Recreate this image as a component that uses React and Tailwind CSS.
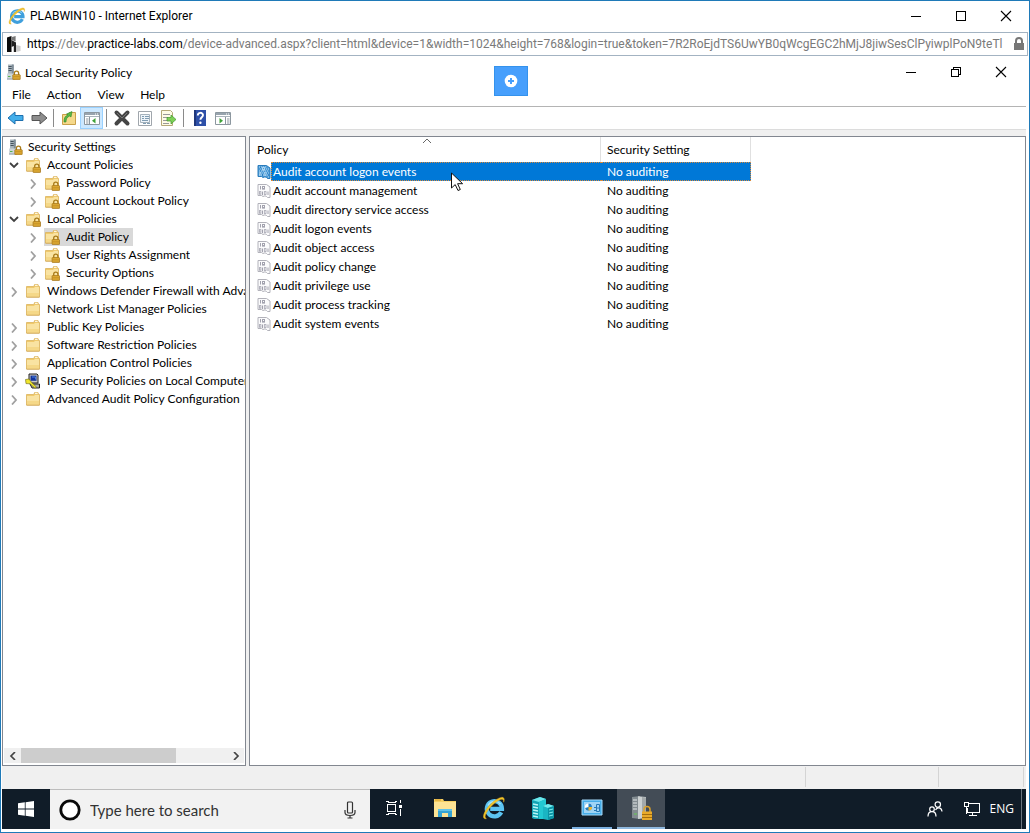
import React from "react";

function IeIcon({ className, dark }) {
  return (
    <svg viewBox="0 0 24 24" className={className} aria-hidden="true">
      <path
        d="M19.2 16.2 A7.6 7.6 0 1 1 20 12.9 H8.2"
        fill="none"
        stroke={dark ? "#5cc4f2" : "#3f9fdc"}
        strokeWidth="4.2"
      />
      <path d="M6 9.5 A7.6 7.6 0 0 1 18.5 8" fill="none" stroke={dark ? "#a8e4fb" : "#8ccdf0"} strokeWidth="1.4" />
      <path
        d="M4.4 22.6 C1.2 23.6 .4 20.6 3 15.6 C6.4 9 14.2 2.2 19.4 1.4 C22.4 1 22.8 3.6 21.6 6.2 C22 3.6 20.8 2.8 18.6 3.6 C13.6 5.4 7.4 11.4 4.4 16.8 C2.6 20.2 2.8 22 4.4 22.6Z"
        fill="#f3c72c"
        stroke="#dba51b"
        strokeWidth=".5"
      />
    </svg>
  );
}

function Lock({ x, y }) {
  return (
    <g transform={`translate(${x} ${y})`}>
      <path d="M1.9 4.4 V2.8 a2.1 2.1 0 0 1 4.2 0 V4.4" fill="none" stroke="#a87a18" strokeWidth="1.3" />
      <rect x=".3" y="4.2" width="7.4" height="5" rx=".6" fill="#e6b23a" stroke="#9c6c10" strokeWidth=".7" />
      <path d="M.8 5.9h6.4M.8 7.6h6.4" stroke="#b07c14" strokeWidth=".6" />
    </g>
  );
}

function ServerLock() {
  return (
    <svg viewBox="0 0 16 16" className="h-4 w-4 shrink-0" aria-hidden="true">
      <path d="M2 .5 H7.5 V11 H2Z" fill="#a9b5bd" />
      <path d="M5.8 .5 H7.8 V11 H5.8Z" fill="#7f8d98" />
      <path d="M2.5 2.5h3.200M2.500 4.500h3.200M2.500 6.500h3.200" stroke="#44525e" />
      <path d="M1 9.500 H9 V15.500 H1Z" fill="#cdd6dc" />
      <path d="M1 15h8" stroke="#94a1ab" />
      <path d="M2 12.500h2.500" stroke="#57b34c" />
      <Lock x="6.500" y="6.500" />
    </svg>
  );
}

function Folder({ locked }) {
  return (
    <svg viewBox="0 0 16 16" className="h-4 w-4 shrink-0" aria-hidden="true">
      <path d="M1.500 3.500 H8.800 L9.600 1.500 H13 L13.600 3.500 H14.500 V14 H1.500Z" fill="#f0ca6c" stroke="#dbb25c" strokeWidth=".8" />
      <path d="M10 2.300h2.600" stroke="#fff" strokeWidth="1" />
      <path d="M2 5 H8.800 L10 3.900 H14 V14 H2Z" fill="#f9e3a2" />
      <path d="M2 10h12v4H2z" fill="#f5d888" />
      <path d="M1.500 14.200h13" stroke="#d0a550" strokeWidth=".8" />
      {locked && <Lock x="7.800" y="6.400" />}
    </svg>
  );
}

function IpSec() {
  return (
    <svg viewBox="0 0 16 16" className="h-4 w-4 shrink-0" aria-hidden="true">
      <path d="M4 1 H12 L13 2 V10 H4Z" fill="#c9c9c2" stroke="#222" strokeWidth="1" />
      <path d="M5.500 2.600h6v5.200h-6z" fill="#14349c" />
      <path d="M7 4h3.500v2.400" stroke="#4a82e0" fill="none" />
      <path d="M5 11 H14.500 V15 H7Z" fill="#aaa" stroke="#222" strokeWidth="1" />
      <path d="M.5 6.500 L4 6 L6.600 9.400 L11.400 14 L10 15.200 L5 10.800 L1 10.600Z" fill="#efe52c" stroke="#6b6710" strokeWidth=".6" />
    </svg>
  );
}

function PolicyIcon({ selected }) {
  const ink = selected ? "#2a7fc4" : "#a2a2ae";
  const light = selected ? "#a7cfec" : "#a2a2ae";
  return (
    <svg viewBox="0 0 14 16" className="h-4 w-[14px] shrink-0" aria-hidden="true">
      <path
        d="M1 1.500 H9.500 L13 4 V14.500 H10.500 L9.500 13.500 L8 12.800 L6 13.500 L4.500 12.500 H1Z"
        fill={selected ? "#4b9ad6" : "#fbfbfc"}
        stroke={selected ? "#2b7cbc" : "#b2b2ba"}
      />
      <path d="M3.500 3v3.500M5.500 8.500V12M11 8.500V12" stroke={ink} />
      <rect x="5.500" y="3.500" width="2" height="2.600" fill="none" stroke={light} />
      <rect x="2.400" y="8.600" width="1.500" height="2.600" fill="none" stroke={light} strokeWidth=".8" />
      <rect x="7.300" y="8.600" width="1.700" height="2.800" fill="none" stroke={light} strokeWidth=".8" />
      {selected && (
        <path
          d="M2 3h1M4 3h1M6 3h1M8 3h1M3 5h1M5 5h1M7 5h1M9 5h1M11 5h1M2 7h1M4 7h1M6 7h1M8 7h1M10 7h1M3 9h1M5 9h1M7 9h1M9 9h1M11 9h1M2 11h1M4 11h1M6 11h1M8 11h1M10 11h1M11 13h1"
          stroke="#b6dcf5"
        />
      )}
    </svg>
  );
}

function Chevron({ open }) {
  return (
    <svg viewBox="0 0 12 12" className="h-3 w-3" aria-hidden="true">
      {open ? (
        <path d="M2 4 L6 8 L10 4" fill="none" stroke="#404040" strokeWidth="1.800" />
      ) : (
        <path d="M4 2.500 L8 7 L4 11.500" fill="none" stroke="#a0a0a0" strokeWidth="1.800" />
      )}
    </svg>
  );
}

const tree = [
  { label: "Account Policies", level: 1, state: "open", icon: "locked" },
  { label: "Password Policy", level: 2, state: "closed", icon: "locked" },
  { label: "Account Lockout Policy", level: 2, state: "closed", icon: "locked" },
  { label: "Local Policies", level: 1, state: "open", icon: "locked" },
  { label: "Audit Policy", level: 2, state: "closed", icon: "locked", selected: true },
  { label: "User Rights Assignment", level: 2, state: "closed", icon: "locked" },
  { label: "Security Options", level: 2, state: "closed", icon: "locked" },
  { label: "Windows Defender Firewall with Advanced", level: 1, state: "closed", icon: "folder" },
  { label: "Network List Manager Policies", level: 1, icon: "folder" },
  { label: "Public Key Policies", level: 1, state: "closed", icon: "folder" },
  { label: "Software Restriction Policies", level: 1, state: "closed", icon: "folder" },
  { label: "Application Control Policies", level: 1, state: "closed", icon: "folder" },
  { label: "IP Security Policies on Local Computer", level: 1, state: "closed", icon: "ip" },
  { label: "Advanced Audit Policy Configuration", level: 1, state: "closed", icon: "folder" },
];

const policies = [
  "Audit account logon events",
  "Audit account management",
  "Audit directory service access",
  "Audit logon events",
  "Audit object access",
  "Audit policy change",
  "Audit privilege use",
  "Audit process tracking",
  "Audit system events",
];

function TreeRow({ item }) {
  return (
    <li className={`flex h-[18px] items-center ${item.level === 2 ? "pl-[23px]" : "pl-1"}`} role="treeitem" aria-selected={!!item.selected}>
      {item.state ? (
        <button type="button" aria-label={`Toggle ${item.label}`} className="flex w-[18px] shrink-0 pl-px">
          <Chevron open={item.state === "open"} />
        </button>
      ) : (
        <span className="w-[18px] shrink-0" />
      )}
      <span className={`flex h-[18px] min-w-0 items-center gap-[6px] pr-1 ${item.selected ? "bg-[#d9d9d9]" : "-mr-1"}`}>
        {item.icon === "ip" ? <IpSec /> : <Folder locked={item.icon === "locked"} />}
        <span className="min-w-0 overflow-hidden whitespace-nowrap">{item.label}</span>
      </span>
    </li>
  );
}

function WindowButtons({ restore }) {
  return (
    <div className={`flex items-center ${restore ? "pr-[2px]" : ""}`}>
      <button type="button" aria-label="Minimize" className="flex h-7 w-[45px] items-center justify-center">
        <svg viewBox="0 0 12 12" className="h-3 w-3" shapeRendering="crispEdges"><path d="M1 6.500h10" stroke="#000" /></svg>
      </button>
      <button type="button" aria-label={restore ? "Restore" : "Maximize"} className="flex h-7 w-[46px] items-center justify-center">
        <svg viewBox="0 0 12 12" className="h-3 w-3" fill="none" stroke="#000" shapeRendering="crispEdges">
          {restore ? <path d="M1.500 3.500h7v7h-7zM3.500 3.500v-2h7v7h-2" /> : <path d="M1.500 1.500h9v9h-9z" />}
        </svg>
      </button>
      <button type="button" aria-label="Close" className="flex h-7 w-[44px] items-center justify-center">
        <svg viewBox="0 0 12 12" className="h-3 w-3"><path d="M1 1l10 10M11 1L1 11" stroke="#000" strokeWidth="1.100" /></svg>
      </button>
    </div>
  );
}

function Tool({ label, active, children }) {
  return (
    <button type="button" aria-label={label} className={`flex h-[22px] w-[23px] items-center justify-center ${active ? "border border-[#99d1ff] bg-[#cce8ff]" : ""}`}>
      <svg viewBox="0 0 18 18" className="h-[18px] w-[18px] shrink-0">{children}</svg>
    </button>
  );
}

function PanelGlyph({ right }) {
  return (
    <>
      <path d="M1.500 3.500h15v12h-15z" fill="#fff" stroke="#8c979f" />
      <path d="M2 4h14v2H2z" fill="#98a4ae" />
      <path d="M12 5h1M14 5h1" stroke="#fff" />
      <path d="M2 7.500h14" stroke="#aab4bc" />
      <path d={right ? "M11.500 8v7" : "M6.500 8v7"} stroke="#8c979f" />
      <path d={right ? "M13 10h2.500M13 12h2.500M13 14h2.500" : "M3 10h2.500M3 12h2.500M3 14h2.500"} stroke="#8c979f" />
      <path d={right ? "M5.500 9l3.500 2.700-3.500 2.700z" : "M12.500 9L9 11.700l3.500 2.700z"} fill="#3fa338" />
    </>
  );
}

const Divider = () => <span className="mx-[3px] h-[18px] w-px bg-[#8a8a8a]" />;

function TaskButton({ label, state, children }) {
  return (
    <button
      type="button"
      aria-label={label}
      className={`flex h-10 w-12 items-center justify-center border-b-2 ${state === "active" ? "border-[#8fb8de] bg-[#434c56]" : "border-transparent"}`}
    >
      {children}
    </button>
  );
}

export default function App() {
  return (
    <div className="relative flex min-h-screen flex-col border border-[#1f7ab8] bg-white px-px font-['Lato','Open_Sans',sans-serif] text-[12px] leading-4 text-black">
      <header className="flex h-[30px] items-center pl-[6px] font-['Roboto',sans-serif]">
        <IeIcon className="h-[18px] w-[18px]" />
        <h1 className="flex-1 pl-1">PLABWIN10 - Internet Explorer</h1>
        <WindowButtons />
      </header>

      <div className="mt-px flex h-6 items-center border border-[#a3b3c2] pl-1 pr-[2px]">
        <svg viewBox="0 0 16 16" className="h-4 w-4 shrink-0" aria-hidden="true">
          <path d="M0 1.500 L4.500 0 V16 H0Z" fill="#0a0a0a" />
          <path d="M4.500 4 L9 6.500 V16 H6.800 V10 L4.500 11Z" fill="#222" />
          <path d="M5 1 L8.600 0 V5.400 L5 4Z" fill="#777" />
          <path d="M9 9 L13.500 10 V15 L9 16Z" fill="#ccc" />
        </svg>
        <p className="min-w-0 flex-1 overflow-hidden whitespace-nowrap pl-1 font-['Roboto',sans-serif] text-[#7a7a7a]">
          <span className="text-black">https</span>://dev.<span className="text-black">practice-labs.com</span>
          /device-advanced.aspx?client=html&amp;device=1&amp;width=1024&amp;height=768&amp;login=true&amp;token=7R2RoEjdTS6UwYB0qWcgEGC2hMjJ8jiwSesClPyiwplPoN9teTl
        </p>
        <svg viewBox="0 0 12 14" className="ml-1 h-[14px] w-3 shrink-0" aria-hidden="true">
          <path d="M3 7V4a3 3 0 0 1 6 0v3" fill="none" stroke="#777" strokeWidth="2" />
          <path d="M1 6h10v7H1z" fill="#777" />
        </svg>
      </div>

      <div className="flex h-[31px] items-center pl-1 pr-[3px]">
        <ServerLock />
        <h2 className="flex-1 pl-[3px] pt-[2px]">Local Security Policy</h2>
        <WindowButtons restore />
      </div>
      <nav className="mr-[2px] flex h-5 gap-4 border-b border-[#b4b4b4] pl-[10px]">
        <button type="button" className="h-4">File</button>
        <button type="button" className="h-4">Action</button>
        <button type="button" className="h-4">View</button>
        <button type="button" className="h-4">Help</button>
      </nav>

      <div role="toolbar" className="flex h-[22px] items-center pl-[2px]">
        <Tool label="Back">
          <path d="M1 9l7-6v3.500h8v5H8V15z" fill="#43aeea" stroke="#1d6fae" />
        </Tool>
        <Tool label="Forward">
          <path d="M17 9l-7-6v3.500H2v5h8V15z" fill="#8d8d8d" stroke="#555" />
        </Tool>
        <Divider />
        <Tool label="Up one level">
          <path d="M2.500 5.500h6l1-2h6v12h-13z" fill="#f5d88a" stroke="#c9a04a" />
          <path d="M4 13c0-4 1-6 4-7L6.500 5 12 2.500 11 8 9.700 7C7 8 6 10 6 13z" fill="#58b947" stroke="#31852a" strokeWidth=".6" />
        </Tool>
        <Tool label="Show console tree" active><PanelGlyph /></Tool>
        <Divider />
        <Tool label="Delete">
          <path d="M3.500 3.500l11 11M14.500 3.500l-11 11" stroke="#454545" strokeWidth="4" strokeLinecap="round" />
          <path d="M4 4l5 5 5-5" fill="none" stroke="#777" strokeWidth="1" />
        </Tool>
        <Tool label="Properties">
          <path d="M2.500 2.500h13v14h-13z" fill="#fff" stroke="#a0a6ac" />
          <path d="M4.500 5.500h9v8h-9z" fill="#eef4f9" stroke="#a6b2bc" />
          <path d="M6 7.500h2M9 7.500h4M6 9.500h2M9 9.500h4M6 11.500h6M7 14.500h3M11 14.500h3" stroke="#7f9cb2" />
        </Tool>
        <Tool label="Export list">
          <path d="M2.500 1.500h9l2 2v13h-11z" fill="#fffbe6" stroke="#b5a978" />
          <path d="M4 5.500h7M4 8.500h5M4 11.500h4M4 14.500h6" stroke="#999" />
          <path d="M8 8.500h4V6l5 4.500-5 4.500v-3H8z" fill="#7ed057" stroke="#3f9a2c" strokeWidth=".7" />
        </Tool>
        <span className="mx-1 h-[18px] w-px bg-[#8a8a8a]" />
        <Tool label="Help">
          <path d="M3 1h12v16H3z" fill="#2e50a8" />
          <path d="M3 1h2v16H3z" fill="#1f377b" />
          <path d="M6.800 6.500c0-3.600 5.200-3.400 5.200-.4 0 2-2.600 2.300-2.600 4.700" fill="none" stroke="#fff" strokeWidth="1.900" />
          <circle cx="9.400" cy="13.700" r="1.200" fill="#fff" />
        </Tool>
        <Tool label="Show action pane"><PanelGlyph right /></Tool>
      </div>

      <main className="mr-[2px] flex flex-1 gap-[3px] border-t border-[#dcdcdc] bg-[#f0f0f0] pt-[6px]">
        <aside className="flex w-[244px] shrink-0 flex-col border border-[#828790] bg-white">
          <div className="flex-1 overflow-hidden pt-px">
            <div className="flex h-[18px] items-center gap-1 pl-[5px]">
              <ServerLock />
              <span>Security Settings</span>
            </div>
            <ul role="tree">
              {tree.map((item) => <TreeRow key={item.label} item={item} />)}
            </ul>
          </div>
          <div className="mx-px mb-[2px] flex h-[15px] items-center bg-[#f0f0f0]">
            <button type="button" aria-label="Scroll left" className="flex w-[17px] justify-center">
              <svg viewBox="0 0 8 8" className="h-2 w-2"><path d="M6 0L2 4l4 4" fill="none" stroke="#444" strokeWidth="1.700" /></svg>
            </button>
            <div className="flex h-[15px] flex-1"><div className="w-3/4 bg-[#cdcdcd]" /></div>
            <button type="button" aria-label="Scroll right" className="flex w-[17px] justify-center">
              <svg viewBox="0 0 8 8" className="h-2 w-2"><path d="M2 0l4 4-4 4" fill="none" stroke="#444" strokeWidth="1.700" /></svg>
            </button>
          </div>
        </aside>

        <section className="flex-1 border border-[#828790] bg-white">
          <table className="w-[501px] table-fixed border-separate border-spacing-0 text-left">
            <thead>
              <tr className="h-[25px]">
                <th className="relative w-[351px] border-r border-[#e0e0e0] p-0 pl-[7px] font-normal">
                  Policy
                  <svg viewBox="0 0 10 6" className="absolute right-[168px] top-px h-[6px] w-[10px]" aria-hidden="true"><path d="M1 5l4-4 4 4" fill="none" stroke="#666" /></svg>
                </th>
                <th className="border-r border-[#e0e0e0] p-0 pl-[6px] font-normal">Security Setting</th>
              </tr>
            </thead>
            <tbody>
              {policies.map((name, i) => (
                <tr key={name} className={`h-[19px] ${i === 0 ? "text-white" : ""}`}>
                  <td className="p-0">
                    <div className="flex h-[19px] items-center pl-[7px]">
                      <PolicyIcon selected={i === 0} />
                      <span className={`flex h-[19px] flex-1 items-center ${i === 0 ? "border-y border-l border-dotted border-[#d98a3c] bg-[#0078d7] pl-px" : "pl-[2px]"}`}>{name}</span>
                    </div>
                  </td>
                  <td className="p-0">
                    <div className={`flex h-[19px] items-center pl-[6px] ${i === 0 ? "border-y border-r border-dotted border-[#d98a3c] bg-[#0078d7]" : ""}`}>No auditing</div>
                  </td>
                </tr>
              ))}
            </tbody>
          </table>
        </section>
      </main>

      <footer className="mr-[2px] flex h-[23px] justify-end bg-[#f0f0f0] pt-px">
        <span className="h-5 w-[133px] border-l border-[#d4d4d4]" />
        <span className="h-5 w-[86px] border-x border-[#d4d4d4]" />
        <span className="w-[2px]" />
      </footer>

      <div className="mb-[3px] mr-[2px] flex h-10 bg-[#101c28]">
        <button type="button" aria-label="Start" className="flex w-12 items-center justify-center">
          <svg viewBox="0 0 16 16" className="h-4 w-4" fill="#fff"><path d="M0 2.300L6.800 1.300V7.600H0zM7.600 1.200L16 0v7.600H7.600zM0 8.400h6.800v6.300L0 13.700zM7.600 8.400H16V16l-8.400-1.200z" /></svg>
        </button>
        <label className="flex w-80 items-center border-t border-[#bdbdbd] bg-[#f2f2f2] pl-[9px] pr-3">
          <svg viewBox="0 0 22 22" className="h-[22px] w-[22px] shrink-0"><circle cx="11" cy="11" r="9.200" fill="#fff" stroke="#0a0a0a" strokeWidth="2.800" /></svg>
          <input type="text" aria-label="Search" placeholder="Type here to search" className="min-w-0 flex-1 bg-transparent pl-[9px] text-[15px] leading-5 placeholder:text-[#333] outline-none" />
          <svg viewBox="0 0 16 18" className="h-[18px] w-4 shrink-0" fill="none" stroke="#333" strokeWidth="1.200">
            <rect x="5.500" y="1" width="5" height="11" rx="1" />
            <path d="M3 9v2.500c0 2 1.500 3 5 3s5-1 5-3V9M8 14.500V17M5.500 17h5" />
          </svg>
        </label>
        <div className="flex gap-px">
          <TaskButton label="Task View">
            <svg viewBox="0 0 18 18" className="h-[18px] w-[18px]" fill="none" stroke="#fff" shapeRendering="crispEdges">
              <path d="M2.500 5.500h8v7h-8zM1 2.500h2v1h7v-1h2M1 15.500h2v-1h7v1h2M15.500 1v3M15.500 10v7" />
              <path d="M14 6h3v3h-3z" fill="#fff" stroke="none" />
            </svg>
          </TaskButton>
          <span className="w-px" />
          <TaskButton label="File Explorer">
            <svg viewBox="0 0 24 24" className="h-6 w-6">
              <path d="M1 3h9l1 2h12v16H1z" fill="#f5cf62" />
              <path d="M1 6h22v15H1z" fill="#fde394" />
              <path d="M2 4h6" stroke="#d59b2c" />
              <path d="M5 13h14v8h-4v-4H9v4H5z" fill="#36a3d3" />
              <path d="M5 13h14v2H5z" fill="#61c3e8" />
            </svg>
          </TaskButton>
          <TaskButton label="Internet Explorer"><IeIcon dark className="h-6 w-6" /></TaskButton>
          <TaskButton label="Server Manager">
            <svg viewBox="0 0 24 24" className="h-6 w-6">
              <path d="M1 4l8-3 6 2v20H3l-2-1z" fill="#13a4b4" />
              <path d="M1 4l8-3 6 2-7 3z" fill="#6de8ec" />
              <path d="M8 6l7-3v20H8z" fill="#22c8d2" />
              <path d="M2 8l5 1M2 11l5 1M2 14l5 1M2 17l5 1M2 20l5 1" stroke="#b5f6f6" strokeWidth="1.300" />
              <path d="M12 10l5-2 6 2v12l-6 2-5-1z" fill="#1ab5c3" />
              <path d="M12 10l5-2 6 2-6 2z" fill="#72e9ed" />
              <path d="M17 12l6-2v12l-6 2z" fill="#0b93a4" />
              <path d="M18 14l4-1M18 17l4-1M18 20l4-1" stroke="#82eef0" />
            </svg>
          </TaskButton>
          <span className="flex w-12 justify-center">
            <button type="button" aria-label="Control Panel" className="flex h-10 w-10 items-center justify-center border-b-2 border-[#7cb1e2]">
              <svg viewBox="0 0 22 18" className="h-[18px] w-[22px]">
                <path d="M1 1h20v15H1z" fill="#45ace8" stroke="#a6dafa" />
                <path d="M3 3h16v11H3z" fill="#9fd4f5" />
                <circle cx="7.500" cy="8" r="3.600" fill="#fff" />
                <path d="M7.500 8V4.400A3.600 3.600 0 1 1 4 9z" fill="#2380c4" />
                <path d="M7.500 8h3.600a3.600 3.600 0 0 1-3.600 3.600z" fill="#f1b62f" />
                <path d="M13 8.500h2M13 11.500h2M15.500 5.500h3v7h-3zM15.500 9h3" fill="none" stroke="#2878b4" />
              </svg>
            </button>
          </span>
          <TaskButton label="Local Security Policy" state="active">
            <svg viewBox="0 0 24 26" className="h-[26px] w-6">
              <path d="M3 2l8-1v23l-8-1z" fill="#828b90" />
              <path d="M9 1.200L17 2v21l-8 1z" fill="#cbd0d1" />
              <path d="M13 2l4 .500V23l-4 .500z" fill="#a3a9ab" />
              <path d="M4 5h4M4 8h4M4 11h4M4 14h4" stroke="#e4e8ea" />
              <path d="M5 19h3" stroke="#62cc50" />
              <path d="M15 17v-2.500a3 3 0 0 1 6 0V17" fill="none" stroke="#dda12a" strokeWidth="1.500" />
              <path d="M13 16.500h10V25H13z" fill="#e9aa28" />
              <path d="M13 19.500h10M13 22.500h10" stroke="#a36d0c" />
            </svg>
          </TaskButton>
        </div>
        <div className="ml-auto flex items-center text-white">
          <button type="button" aria-label="People" className="mr-5">
            <svg viewBox="0 0 16 16" className="h-4 w-4" fill="none" stroke="#fff" strokeWidth="1.200">
              <circle cx="10.800" cy="3.600" r="2.700" /><circle cx="5" cy="8.200" r="2.300" />
              <path d="M1 15.500c0-6.500 8-6.500 8 0M8.500 9c2-3.500 6-2.500 6.500 1.500" />
            </svg>
          </button>
          <button type="button" aria-label="Network" className="mr-[9px]">
            <svg viewBox="0 0 18 16" className="h-4 w-[18px]" fill="none" stroke="#fff" shapeRendering="crispEdges">
              <path d="M5 2.500h11.500v9h-12V7M9.500 11.500v3M6 14.500h8M1.500 1.500h4v4h-4zM3.500 5.500v7" />
            </svg>
          </button>
          <button type="button" className="mr-[7px] font-['Open_Sans',sans-serif]">ENG</button>
          <span className="mr-1 h-10 w-px bg-[#6c757e]" />
        </div>
      </div>

      <button type="button" aria-label="Show session controls" className="absolute left-[493px] top-[65px] flex h-[30px] w-[34px] items-center justify-center border border-[#3492ec] bg-[#479ffc]">
        <svg viewBox="0 0 14 14" className="h-[14px] w-[14px]"><circle cx="7" cy="7" r="6.300" fill="#fff" /><path d="M7 4v6M4 7h6" stroke="#479ffc" strokeWidth="2" /></svg>
      </button>
      <svg viewBox="0 0 12 19" className="pointer-events-none absolute left-[450px] top-[171px] h-[19px] w-3" aria-hidden="true">
        <path d="M.500 1v15l3.700-3.400L7 18.500l2.300-1-2.700-5.800h5z" fill="#fff" stroke="#111" />
      </svg>
    </div>
  );
}
